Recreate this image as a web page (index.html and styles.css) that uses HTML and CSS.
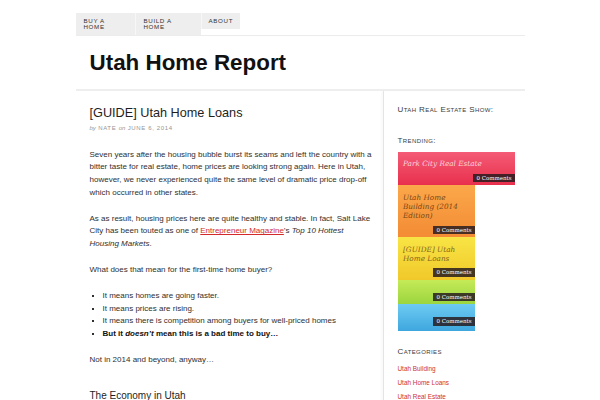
FILE: index.html
```html
<!DOCTYPE html>
<html>
<head>
<meta charset="utf-8">
<title>Utah Home Report</title>
<link rel="stylesheet" href="styles.css">
</head>
<body>
<div class="page">
  <nav class="nav">
    <a class="tab tab-buy">Buy a<br>Home</a>
    <a class="tab tab-build">Build a<br>Home</a>
    <a class="tab tab-about">About</a>
  </nav>
  <header class="header">
    <h1 class="site-title">Utah Home Report</h1>
  </header>
  <div class="columns">
    <main class="main">
      <h2 class="post-title">[GUIDE] Utah Home Loans</h2>
      <div class="meta"><em>by</em> NATE <em>on</em> JUNE 6, 2014</div>
      <div class="entry">
        <p>Seven years after the housing bubble burst its seams and left the country with a bitter taste for real estate, home prices are looking strong again. Here in Utah, however, we never experienced quite the same level of dramatic price drop-off which occurred in other states.</p>
        <p>As as result, housing prices here are quite healthy and stable. In fact, Salt Lake City has been touted as one of <a class="link">Entrepreneur Magazine</a>’s <em>Top 10 Hottest Housing Markets</em>.</p>
        <p>What does that mean for the first-time home buyer?</p>
        <ul>
          <li>It means homes are going faster.</li>
          <li>It means prices are rising.</li>
          <li>It means there is competition among buyers for well-priced homes</li>
          <li><strong>But it <em>doesn’t</em> mean this is a bad time to buy…</strong></li>
        </ul>
        <p>Not in 2014 and beyond, anyway…</p>
        <h3 class="section-title">The Economy in Utah</h3>
      </div>
    </main>
    <aside class="sidebar">
      <h4 class="widget-title">Utah Real Estate Show:</h4>
      <h4 class="widget-title trending-title">Trending:</h4>
      <div class="trend-list">
        <div class="trend trend-red trend-wide">
          <div class="trend-name">Park City Real Estate</div>
          <span class="badge">0 Comments</span>
        </div>
        <div class="trend trend-orange">
          <div class="trend-name">Utah Home Building (2014 Edition)</div>
          <span class="badge">0 Comments</span>
        </div>
        <div class="trend trend-yellow">
          <div class="trend-name">[GUIDE] Utah Home Loans</div>
          <span class="badge">0 Comments</span>
        </div>
        <div class="trend trend-green">
          <div class="trend-name"></div>
          <span class="badge">0 Comments</span>
        </div>
        <div class="trend trend-blue">
          <div class="trend-name"></div>
          <span class="badge">0 Comments</span>
        </div>
      </div>
      <h4 class="widget-title categories-title">Categories</h4>
      <ul class="cat-list">
        <li><a class="cat-link">Utah Building</a></li>
        <li><a class="cat-link">Utah Home Loans</a></li>
        <li><a class="cat-link">Utah Real Estate</a></li>
      </ul>
    </aside>
  </div>
</div>
</body>
</html>
```
FILE: styles.css
```css
html, body {
  margin: 0;
  padding: 0;
  background: #fff;
}
body {
  font-family: "Liberation Sans", Arial, sans-serif;
  color: #2f2f2f;
  overflow: hidden;
}
.page {
  width: 449px;
  margin: 0 auto;
}

/* nav */
.nav {
  display: flex;
  align-items: flex-start;
  margin-top: 13px;
  border-bottom: 1px solid #ececec;
}
.tab {
  display: block;
  box-sizing: border-box;
  background: #eeeeee;
  color: #333;
  font-size: 6.2px;
  line-height: 6px;
  letter-spacing: 0.65px;
  text-transform: uppercase;
  padding: 5px 8px 5px;
}
.tab-buy { width: 59px; }
.tab-build { width: 66px; border-left: 1px solid #f7f7f7; }
.tab-about { padding: 5px 7px 5px; border-left: 1px solid #f7f7f7; }

/* header */
.header {
  padding: 14px 14px 13px;
  border-bottom: 2px solid #eeeeee;
}
.site-title {
  margin: 0;
  font-family: "Liberation Sans", Arial, sans-serif;
  font-weight: bold;
  font-size: 22.4px;
  line-height: 26px;
  color: #111;
}

/* columns */
.columns {
  display: flex;
  align-items: stretch;
}
.main {
  box-sizing: border-box;
  width: 307px;
  padding: 14px 10px 0 14px;
}
.sidebar {
  flex: 1;
  border-left: 1px solid #e4e4e4;
  box-shadow: -2px 0 2px rgba(0, 0, 0, 0.025);
  padding: 14px 0 0 14px;
  min-height: 320px;
}

/* post */
.post-title {
  margin: 0;
  font-weight: normal;
  font-size: 12.7px;
  line-height: 16px;
  color: #1e1e1e;
}
.meta {
  margin-top: 3px;
  font-size: 6px;
  line-height: 8px;
  letter-spacing: 0.65px;
  color: #959595;
}
.meta em {
  letter-spacing: 0;
}
.entry {
  margin-top: 16.5px;
  font-size: 8px;
  line-height: 12.8px;
}
.entry p {
  margin: 0 0 13px;
}
.entry ul {
  margin: 0 0 13px;
  padding-left: 13px;
  list-style: square;
}
.entry strong {
  color: #111;
}
.link {
  color: #d22a2a;
  text-decoration: underline;
}
.section-title {
  margin: 22px 0 0;
  font-weight: normal;
  font-size: 10px;
  line-height: 14px;
  color: #1e1e1e;
}

/* sidebar */
.widget-title {
  margin: 0;
  font-weight: normal;
  font-size: 8px;
  line-height: 10px;
  font-variant: small-caps;
  letter-spacing: 0.4px;
  color: #3a3a3a;
}
.trending-title { margin-top: 21px; }
.trend-list {
  margin-top: 6px;
  display: flex;
  flex-direction: column;
  align-items: flex-start;
}
.trend {
  box-sizing: border-box;
  width: 77px;
  padding: 7.2px 0 3px 5.5px;
  display: flex;
  flex-direction: column;
}
.trend-wide { width: 117px; }
.trend-name {
  font-family: "DejaVu Serif", "Liberation Serif", serif;
  font-style: italic;
  font-size: 7.3px;
  line-height: 9.2px;
  padding-right: 5px;
  margin-bottom: 5.4px;
}
.badge {
  align-self: flex-end;
  background: rgba(40, 28, 30, 0.85);
  color: #fff;
  font-family: "DejaVu Serif", "Liberation Serif", serif;
  font-size: 5.5px;
  line-height: 8.7px;
  padding: 0 3px;
}
.trend-red {
  background: linear-gradient(#f45b76, #e8304d);
}
.trend-red .trend-name { color: rgba(255, 225, 232, 0.9); }
.trend-orange {
  background: linear-gradient(#fba84a, #f38b34);
}
.trend-orange .trend-name { color: #7a4712; }
.trend-yellow {
  background: linear-gradient(#f8e545, #f1c82a);
}
.trend-yellow .trend-name { color: #86651a; }
.trend-green {
  background: linear-gradient(#c5ea58, #9bd53e);
}
.trend-blue {
  background: linear-gradient(#6dcbf3, #3ea7de);
  padding-bottom: 5.5px;
}
.categories-title { margin-top: 16px; }
.cat-list {
  list-style: none;
  margin: 5px 0 0;
  padding: 0;
  font-size: 6.4px;
  line-height: 14px;
}
.cat-link {
  color: #d0312d;
}
```
